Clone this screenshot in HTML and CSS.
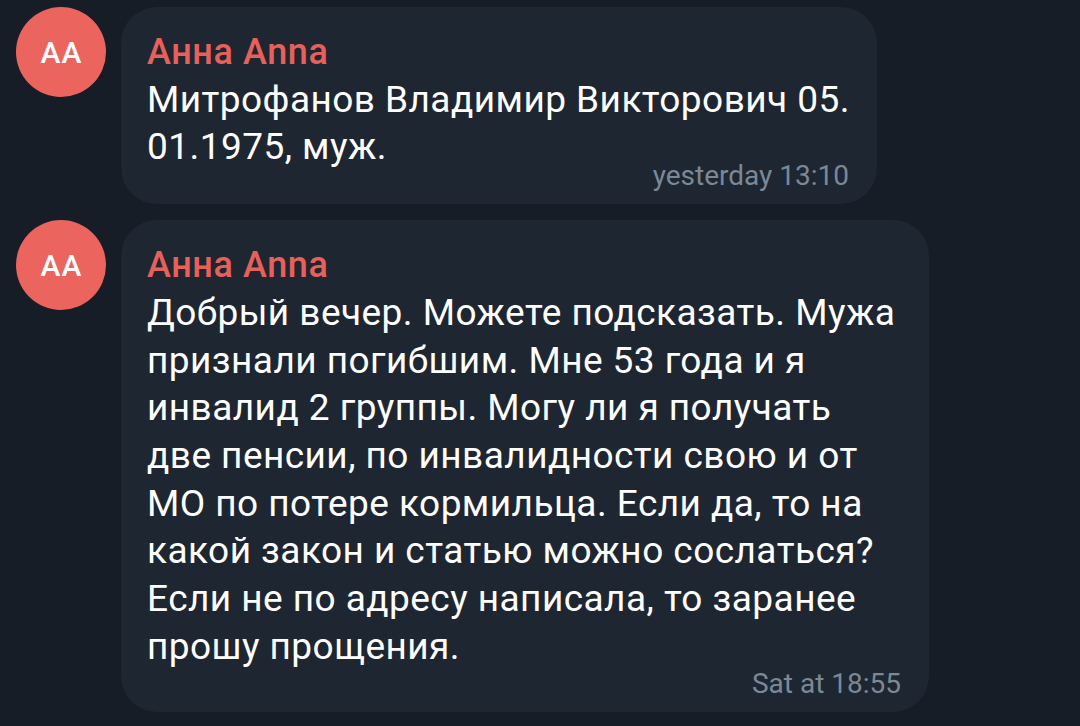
FILE: index.html
```html
<!DOCTYPE html>
<html lang="ru">
<head>
<meta charset="utf-8">
<link rel="stylesheet" href="styles.css">
</head>
<body>
<div class="chat">
  <div class="msg">
    <div class="avatar">AA</div>
    <div class="bubble bubble-first">
      <div class="name">Анна Anna</div>
      <div class="text">Митрофанов Владимир Викторович 05.<br>01.1975, муж.</div>
      <div class="time">yesterday 13:10</div>
    </div>
  </div>
  <div class="msg">
    <div class="avatar">AA</div>
    <div class="bubble bubble-second">
      <div class="name">Анна Anna</div>
      <div class="text">Добрый вечер. Можете подсказать. Мужа<br>признали погибшим. Мне 53 года и я<br>инвалид 2 группы. Могу ли я получать<br>две пенсии, по инвалидности свою и от<br>МО по потере кормильца. Если да, то на<br>какой закон и статью можно сослаться?<br>Если не по адресу написала, то заранее<br>прошу прощения.</div>
      <div class="time">Sat at 18:55</div>
    </div>
  </div>
</div>
</body>
</html>
```

FILE: styles.css
```css
html, body {
  margin: 0;
  padding: 0;
  background: #171d27;
}
body {
  width: 1080px;
  height: 726px;
  overflow: hidden;
  font-family: Roboto, "Noto Sans", sans-serif;
}
.chat {
  display: flex;
  flex-direction: column;
  gap: 16px;
  padding: 7px 0 0 16px;
}
.msg {
  display: flex;
  align-items: flex-start;
  gap: 15px;
}
.avatar {
  flex: none;
  box-sizing: border-box;
  width: 90px;
  height: 90px;
  border-radius: 50%;
  background: #ec645e;
  color: #ffffff;
  font-size: 30px;
  font-weight: 500;
  letter-spacing: 1px;
  padding-left: 1px;
  display: flex;
  align-items: center;
  justify-content: center;
}
.bubble {
  box-sizing: border-box;
  background: #1e2632;
  border-radius: 36px;
  padding: 25px 28px 13.5px 26px;
  display: flex;
  flex-direction: column;
}
.bubble-first { width: 756px; }
.bubble-second { width: 808px; }
.name {
  color: #e8605a;
  font-size: 36px;
  font-weight: 500;
  letter-spacing: 0.6px;
  line-height: 40px;
  margin-bottom: 3.5px;
}
.text {
  color: #ffffff;
  font-size: 37px;
  letter-spacing: 0.45px;
  line-height: 47.7px;
  white-space: nowrap;
}
.time {
  align-self: flex-end;
  color: #7b8896;
  font-size: 28px;
  line-height: 30px;
  margin-top: -10px;
}
.bubble-second .time {
  margin-top: -2px;
}
```
